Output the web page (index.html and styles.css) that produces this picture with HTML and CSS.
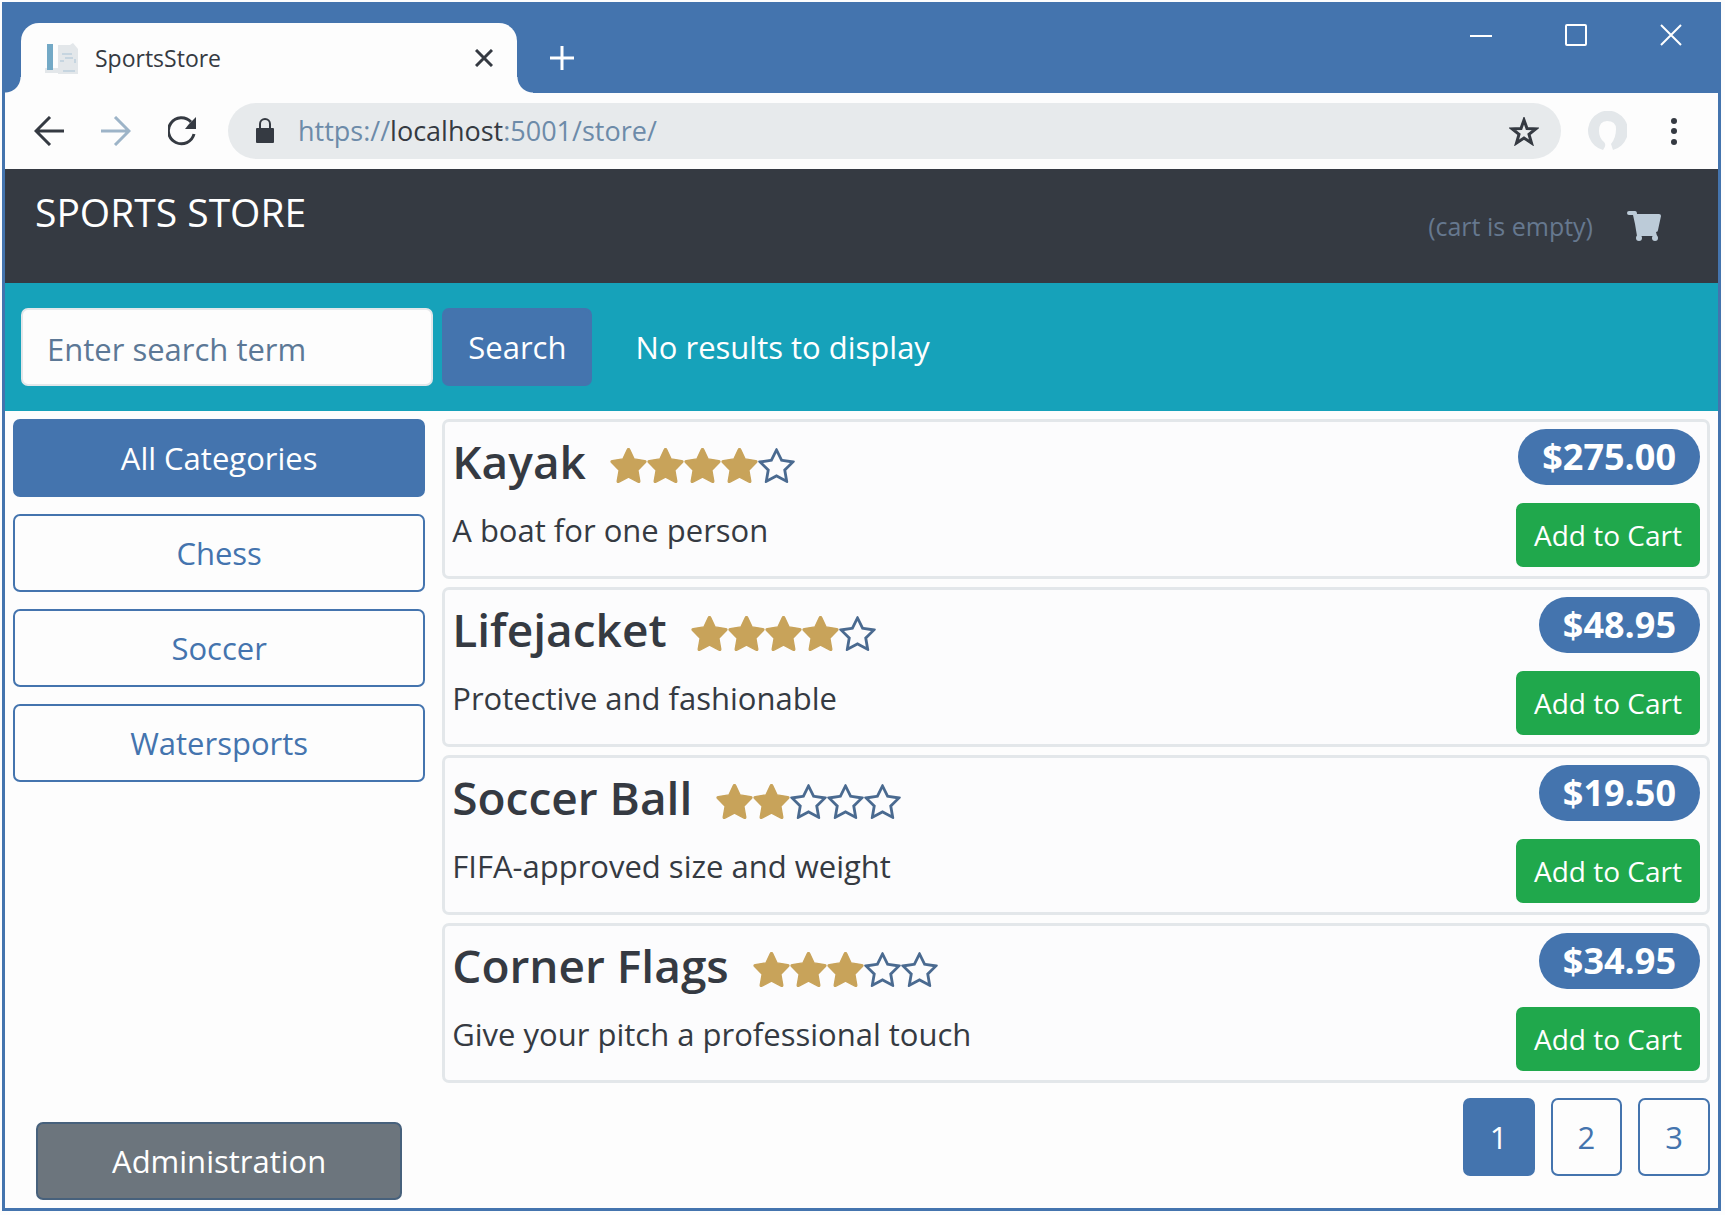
FILE: index.html
```html
<!DOCTYPE html>
<html lang="en">
<head>
<meta charset="utf-8">
<meta name="viewport" content="width=device-width, initial-scale=1">
<title>SportsStore</title>
<link rel="stylesheet" href="styles.css">
</head>
<body>
<svg class="defs" aria-hidden="true">
  <symbol id="star" viewBox="64 32 1664 1587"><path stroke="currentColor" stroke-width="60" stroke-linejoin="round" d="M1690 647q0 22-26 48l-343 344 86 480q1 7 1 20 0 21-10.500 35.500t-30.500 14.500q-19 0-40-12l-431-226-431 226q-22 12-40 12-21 0-31.500-14.500t-10.500-35.500q0-6 2-20l86-480-344-344q-25-27-25-48 0-37 56-46l482-73 207-435q19-41 49-41t49 41l207 435 482 73q56 9 56 46z"/></symbol>
  <symbol id="star-o" viewBox="64 32 1664 1587"><path d="M1201 1004l306-297-422-62-189-382-189 382-422 62 306 297-73 421 378-199 377 199zm527-357q0 22-26 48l-363 354 86 500q1 7 1 20 0 50-41 50-19 0-40-12l-449-236-449 236q-22 12-40 12-21 0-31.500-14.500t-10.500-35.500q0-6 2-20l86-500-364-354q-25-27-25-48 0-37 56-46l502-73 225-455q19-41 49-41t49 41l225 455 502 73q56 9 56 46z"/></symbol>
</svg>
<div class="window">
  <div class="tab-strip">
    <div class="tab">
      <svg class="favicon" viewBox="0 0 34 34" aria-hidden="true"><path class="sheet" d="M0 27h14v5H0zM13 4h12l3-2 5 6v25H13z"/><path class="spine" d="M2 3h6v26H2z"/><path class="lines" d="M17 13h10M15 20h4M20 17h8M30 18v4M18 30h12"/></svg>
      <span class="tab-title">SportsStore</span>
      <button class="icon-button" aria-label="Close tab"><svg width="18" height="18" viewBox="0 0 18 18"><path class="stroke" d="M1 1l16 16M17 1L1 17"/></svg></button>
    </div>
    <button class="icon-button new-tab" aria-label="New tab"><svg width="26" height="26" viewBox="0 0 26 26"><path class="stroke" d="M13 1v24M1 13h24"/></svg></button>
    <div class="controls">
      <button class="icon-button" aria-label="Minimize"><svg width="22" height="22" viewBox="0 0 22 22"><path class="thin" d="M0 12h22"/></svg></button>
      <button class="icon-button" aria-label="Maximize"><svg width="22" height="22" viewBox="0 0 22 22"><rect class="thin" x="1" y="1" width="20" height="20" rx="1"/></svg></button>
      <button class="icon-button" aria-label="Close window"><svg width="22" height="22" viewBox="0 0 22 22"><path class="thin" d="M1 1l20 20M21 1L1 21"/></svg></button>
    </div>
  </div>
  <div class="toolbar">
    <div class="nav-buttons">
      <button class="icon-button" aria-label="Back"><svg width="30" height="30" viewBox="0 0 30 30"><path class="stroke" d="M30 15H2M16 1L2 15l14 14"/></svg></button>
      <button class="icon-button faded" aria-label="Forward"><svg width="30" height="30" viewBox="0 0 30 30"><path class="stroke" d="M0 15h28M14 1l14 14-14 14"/></svg></button>
      <button class="icon-button" aria-label="Reload"><svg width="30" height="30" viewBox="0 0 30 30"><path class="stroke" d="M26 18A13 13 0 1 1 23 6"/><path d="M28 1v12H17l4-5 3-3z"/></svg></button>
    </div>
    <div class="address">
      <svg width="18" height="26" viewBox="0 0 18 26" aria-hidden="true"><rect y="10" width="18" height="15" rx="1"/><path class="lock-loop" d="M4 11V6a5 5 0 0 1 10 0v5"/></svg>
      <span class="url">https://<b>localhost</b>:5001/store/</span>
      <button class="icon-button" aria-label="Bookmark"><svg width="30" height="29" viewBox="0 0 30 29"><path class="bookmark" d="M15 3l3 8.500 9 .3-7 5.500 2.500 8.700L15 21l-7.500 5L10 17.300 3 11.800l9-.3z"/></svg></button>
    </div>
    <svg class="avatar" width="40" height="40" viewBox="0 0 40 40" aria-hidden="true"><path d="M16 39A20 20 0 1 1 26 39L24 33Q29 27 29 18Q29 10 20 10Q12 10 12 20Q12 27 17 31Q20 34 16 39Z"/></svg>
    <button class="icon-button" aria-label="Menu"><svg width="8" height="30" viewBox="0 0 8 30"><circle cx="4" cy="5" r="3"/><circle cx="4" cy="15" r="3"/><circle cx="4" cy="26" r="3"/></svg></button>
  </div>

  <header class="store-header">
    <a class="brand" href="#">SPORTS STORE</a>
    <div class="cart">
      <small>(cart is empty)</small>
      <a class="cart-link" href="#" aria-label="Cart"><svg width="34" height="32" viewBox="0 0 34 32"><path d="M2 1h6q2 0 2 3h22q2 0 2 2l-3 14q0 2-2 2l1 4H10L8 14 6 5H2Q0 5 0 3T2 1z"/><circle cx="12" cy="28" r="3"/><circle cx="28" cy="28" r="3"/></svg></a>
    </div>
  </header>

  <form class="search">
    <input type="text" aria-label="Search term" placeholder="Enter search term">
    <button class="btn primary" type="button">Search</button>
    <span class="search-status">No results to display</span>
  </form>

  <div class="content">
    <nav class="sidebar" aria-label="Categories">
      <button class="btn primary">All Categories</button>
      <button class="btn outline">Chess</button>
      <button class="btn outline">Soccer</button>
      <button class="btn outline">Watersports</button>
      <a class="btn secondary" href="#">Administration</a>
    </nav>
    <main class="products">
      <article class="card">
        <div class="info">
          <h4>Kayak <span class="rating"><svg><use href="#star"/></svg><svg><use href="#star"/></svg><svg><use href="#star"/></svg><svg><use href="#star"/></svg><svg class="empty"><use href="#star-o"/></svg></span></h4>
          <p>A boat for one person</p>
        </div>
        <div class="buy"><span class="price">$275.00</span><button class="btn success">Add to Cart</button></div>
      </article>
      <article class="card">
        <div class="info">
          <h4>Lifejacket <span class="rating"><svg><use href="#star"/></svg><svg><use href="#star"/></svg><svg><use href="#star"/></svg><svg><use href="#star"/></svg><svg class="empty"><use href="#star-o"/></svg></span></h4>
          <p>Protective and fashionable</p>
        </div>
        <div class="buy"><span class="price">$48.95</span><button class="btn success">Add to Cart</button></div>
      </article>
      <article class="card">
        <div class="info">
          <h4>Soccer Ball <span class="rating"><svg><use href="#star"/></svg><svg><use href="#star"/></svg><svg class="empty"><use href="#star-o"/></svg><svg class="empty"><use href="#star-o"/></svg><svg class="empty"><use href="#star-o"/></svg></span></h4>
          <p>FIFA-approved size and weight</p>
        </div>
        <div class="buy"><span class="price">$19.50</span><button class="btn success">Add to Cart</button></div>
      </article>
      <article class="card">
        <div class="info">
          <h4>Corner Flags <span class="rating"><svg><use href="#star"/></svg><svg><use href="#star"/></svg><svg><use href="#star"/></svg><svg class="empty"><use href="#star-o"/></svg><svg class="empty"><use href="#star-o"/></svg></span></h4>
          <p>Give your pitch a professional touch</p>
        </div>
        <div class="buy"><span class="price">$34.95</span><button class="btn success">Add to Cart</button></div>
      </article>
      <div class="pages">
        <button class="btn primary">1</button>
        <button class="btn outline">2</button>
        <button class="btn outline">3</button>
      </div>
    </main>
  </div>
</div>
</body>
</html>
```

FILE: styles.css
```css
:root {
  --blue: #4474ae;
  --dark: #353a42;
  --teal: #16a2ba;
  --green: #20a84c;
  --gold: #c8a35a;
  --line: #e3e7ea;
  --page: #fdfdfd;
}

* { box-sizing: border-box; }

body {
  margin: 0;
  min-height: 100vh;
  padding: 2px 4px 4px 2px;
  display: flex;
  background: var(--page);
  color: var(--dark);
  font: 31px/46px "Open Sans", "Noto Sans", sans-serif;
}

.defs { position: absolute; width: 0; height: 0; }

svg { display: block; fill: currentColor; }
.stroke { fill: none; stroke: currentColor; stroke-width: 3; }
.thin { fill: none; stroke: currentColor; stroke-width: 2; }

button, input { font: inherit; }

.window {
  flex: 1;
  min-width: 0;
  display: flex;
  flex-direction: column;
  border: 3px solid var(--blue);
  background: var(--page);
}

.icon-button {
  padding: 0;
  border: 0;
  background: none;
  color: inherit;
}

/* Browser chrome */
.tab-strip {
  display: flex;
  height: 88px;
  padding: 18px 36px 0 16px;
  background: var(--blue);
}

.tab {
  position: relative;
  display: flex;
  align-items: center;
  width: 496px;
  padding: 0 24px;
  border-radius: 18px 18px 0 0;
  background: var(--page);
}

.tab::before, .tab::after {
  content: "";
  position: absolute;
  bottom: 0;
  width: 16px;
  height: 16px;
}
.tab::before {
  right: 100%;
  background: radial-gradient(circle at 0 0, transparent 15px, var(--page) 16px);
}
.tab::after {
  left: 100%;
  background: radial-gradient(circle at 100% 0, transparent 15px, var(--page) 16px);
}

.favicon { width: 34px; height: 34px; margin-right: 16px; }
.sheet { fill: var(--line); }
.spine { fill: #73a9c6; }
.lines { fill: none; stroke: #a9c3d6; stroke-width: 1; }

.tab-title { flex: 1; font-size: 23px; }

.new-tab { margin-left: 32px; color: #fff; }

.controls {
  display: flex;
  align-items: flex-start;
  gap: 73px;
  margin-left: auto;
  padding-top: 1px;
  color: #fff;
}

.toolbar {
  display: flex;
  align-items: center;
  height: 76px;
  padding: 0 40px 0 29px;
}
.nav-buttons { display: flex; gap: 37px; margin-right: 30px; }
.faded { color: #9db4c8; }

.address {
  flex: 1;
  display: flex;
  align-items: center;
  height: 56px;
  margin-right: 26px;
  padding: 0 22px 0 28px;
  border-radius: 28px;
  background: #e7eaec;
}
.lock-loop { fill: none; stroke: currentColor; stroke-width: 2; }
.url { flex: 1; margin-left: 24px; color: #6d8ba9; font-size: 27px; }
.url b { color: var(--dark); font-weight: 400; }
.bookmark { fill: none; stroke: currentColor; stroke-width: 3; }
.avatar { margin-right: 43px; color: var(--line); }

/* Store header */
.store-header {
  display: flex;
  justify-content: space-between;
  height: 114px;
  padding: 20px 57px 20px 30px;
  background: var(--dark);
}
.brand { color: #fff; font-size: 39px; text-decoration: none; }
.cart { display: flex; align-items: center; gap: 34px; }
.cart small { color: #66788f; font-size: 25px; }
.cart-link { color: #bccbd8; }

.btn {
  display: block;
  padding: 14px 24px;
  border: 2px solid var(--blue);
  border-radius: 7px;
  text-align: center;
  text-decoration: none;
}
.primary { background: var(--blue); color: #fff; }
.outline { background: var(--page); color: var(--blue); }
.secondary { border-color: #47617c; background: #6c757d; color: #fff; }
.success { padding: 7px 16px; border-color: var(--green); background: var(--green); color: #fff; font-size: 28px; }

.search {
  display: flex;
  gap: 9px;
  padding: 25px 16px;
  background: var(--teal);
  color: #fff;
}
.search input {
  width: calc(25% - 8px);
  padding: 16px 24px 12px;
  border: 2px solid var(--line);
  border-radius: 7px;
  background: var(--page);
  color: var(--dark);
}
.search input::placeholder { color: #5c7896; opacity: 1; }
.search-status { padding: 16px 34px; }

/* Catalogue */
.content { flex: 1; display: flex; }

.sidebar {
  display: flex;
  flex-direction: column;
  gap: 17px;
  width: 25%;
  padding: 8px;
}
.sidebar .secondary { margin: auto 23px 0; }

.products {
  flex: 1;
  display: flex;
  flex-direction: column;
  gap: 8px;
  padding: 8px 8px 8px 9px;
}

.card {
  display: flex;
  justify-content: space-between;
  padding: 7px;
  border: 3px solid var(--line);
  border-radius: 7px;
  background: #fcfcfd;
}
.card h4 {
  display: flex;
  align-items: center;
  gap: 24px;
  margin: 0 0 14px;
  font-size: 46px;
  font-weight: 600;
  line-height: 64px;
}
.card p { margin: 0; }

.rating { display: flex; padding-top: 8px; color: var(--gold); }
.rating svg { width: 37px; height: 35px; }
.rating .empty { color: #4a6a90; }

.buy { display: flex; flex-direction: column; align-items: flex-end; gap: 18px; padding-bottom: 2px; }
.price {
  padding: 5px 24px;
  border-radius: 28px;
  background: var(--blue);
  color: #fff;
  font-size: 36px;
  font-weight: 700;
}

.pages { display: flex; justify-content: flex-end; gap: 16px; margin-top: 7px; }
.pages .btn { padding: 14px 25px; }
```
